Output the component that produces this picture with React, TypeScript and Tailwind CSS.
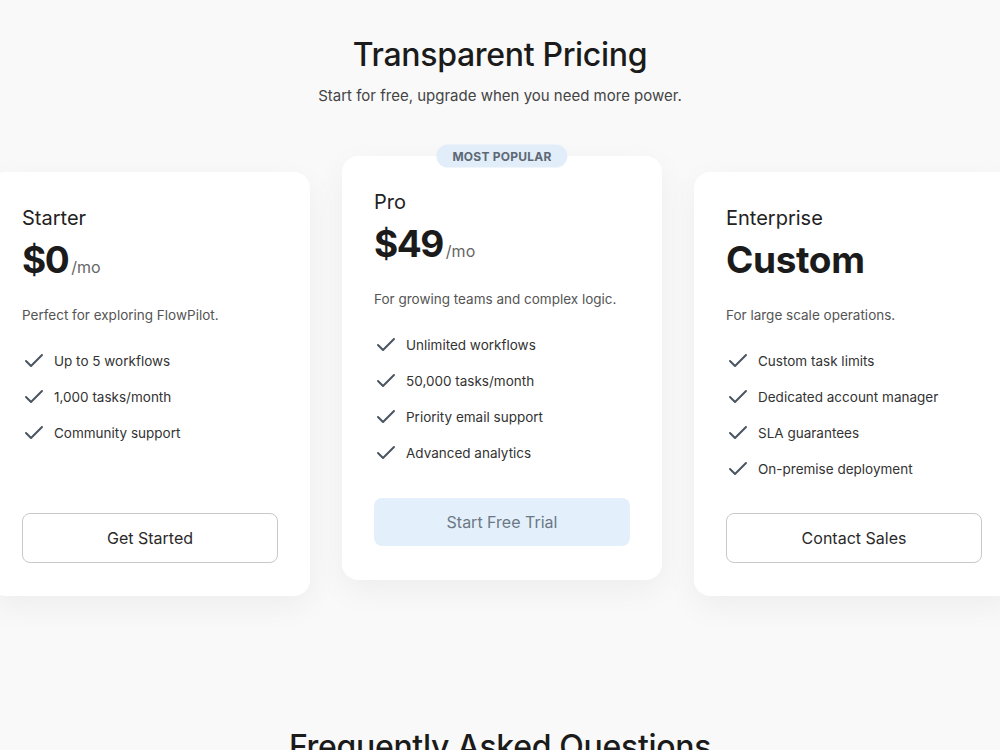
import React from "react";
import { Check } from "lucide-react";

type Plan = {
  name: string;
  price: string;
  suffix?: string;
  desc: string;
  features: string[];
  cta: string;
  featured?: boolean;
};

const plans: Plan[] = [
  {
    name: "Starter",
    price: "$0",
    suffix: "/mo",
    desc: "Perfect for exploring FlowPilot.",
    features: ["Up to 5 workflows", "1,000 tasks/month", "Community support"],
    cta: "Get Started",
  },
  {
    name: "Pro",
    price: "$49",
    suffix: "/mo",
    desc: "For growing teams and complex logic.",
    features: ["Unlimited workflows", "50,000 tasks/month", "Priority email support", "Advanced analytics"],
    cta: "Start Free Trial",
    featured: true,
  },
  {
    name: "Enterprise",
    price: "Custom",
    desc: "For large scale operations.",
    features: ["Custom task limits", "Dedicated account manager", "SLA guarantees", "On-premise deployment"],
    cta: "Contact Sales",
  },
];

function Card({ plan }: { plan: Plan }) {
  return (
    <div
      className={
        "relative flex h-[424px] w-[320px] shrink-0 flex-col rounded-2xl bg-white px-8 pt-8 pb-[33px] shadow-[0_10px_32px_rgba(0,0,0,0.05)] " +
        (plan.featured ? "-translate-y-4" : "")
      }
    >
      {plan.featured && (
        <div className="absolute left-1/2 top-0 flex h-[23px] -translate-x-1/2 -translate-y-1/2 items-center rounded-full bg-[#e1eefa] px-4 text-[12px] font-bold tracking-[0.02em] text-[#5d6874]">
          MOST POPULAR
        </div>
      )}
      <div className="text-[20px] leading-7 text-[#222]">{plan.name}</div>
      <div className="mt-2 flex items-baseline">
        <span
          className={
            "text-[37px] font-bold leading-10 text-[#1b1b1b] " +
            (plan.suffix ? "tracking-[-0.04em]" : "tracking-[-0.01em]")
          }
        >
          {plan.price}
        </span>
        {plan.suffix && <span className="ml-[3px] text-[16px] text-[#666]">{plan.suffix}</span>}
      </div>
      <p className="mt-[25px] text-[13.5px] leading-5 text-[#555]">{plan.desc}</p>
      <ul className="mt-[24px] flex flex-col gap-3">
        {plan.features.map((f) => (
          <li key={f} className="flex h-6 items-center gap-2 text-[13.5px] text-[#333]">
            <Check size={24} strokeWidth={2} className="shrink-0 text-[#4a5561]" />
            <span>{f}</span>
          </li>
        ))}
      </ul>
      <div className="mt-auto">
        {plan.featured ? (
          <button className="my-px flex h-12 w-full items-center justify-center rounded-lg bg-[#e3f0fb] text-[16px] text-[#6c7886]">
            {plan.cta}
          </button>
        ) : (
          <button className="flex h-[50px] w-full items-center justify-center rounded-lg border border-[#c9c9cc] bg-white text-[16px] text-[#2a2a2a]">
            {plan.cta}
          </button>
        )}
      </div>
    </div>
  );
}

export default function App() {
  return (
    <div
      className="min-h-screen overflow-hidden bg-[#f9f9f9] text-[#1b1b1b]"
      style={{ fontFamily: "Inter, 'Noto Sans', 'Liberation Sans', sans-serif" }}
    >
      <section className="pt-[34px] pb-16">
        <h2 className="text-center text-[32px] font-medium leading-[42px] tracking-[-0.01em] text-[#1b1b1b]">
          Transparent Pricing
        </h2>
        <p className="mt-2 text-center text-[15px] leading-6 text-[#444]">
          Start for free, upgrade when you need more power.
        </p>
        <div className="mt-[64px] flex justify-center gap-8 pl-[4px]">
          {plans.map((p) => (
            <Card key={p.name} plan={p} />
          ))}
        </div>
      </section>
      <section className="pt-[66px]">
        <h2 className="text-center text-[32px] font-medium leading-[42px] tracking-[-0.01em] text-[#1b1b1b]">
          Frequently Asked Questions
        </h2>
      </section>
    </div>
  );
}
